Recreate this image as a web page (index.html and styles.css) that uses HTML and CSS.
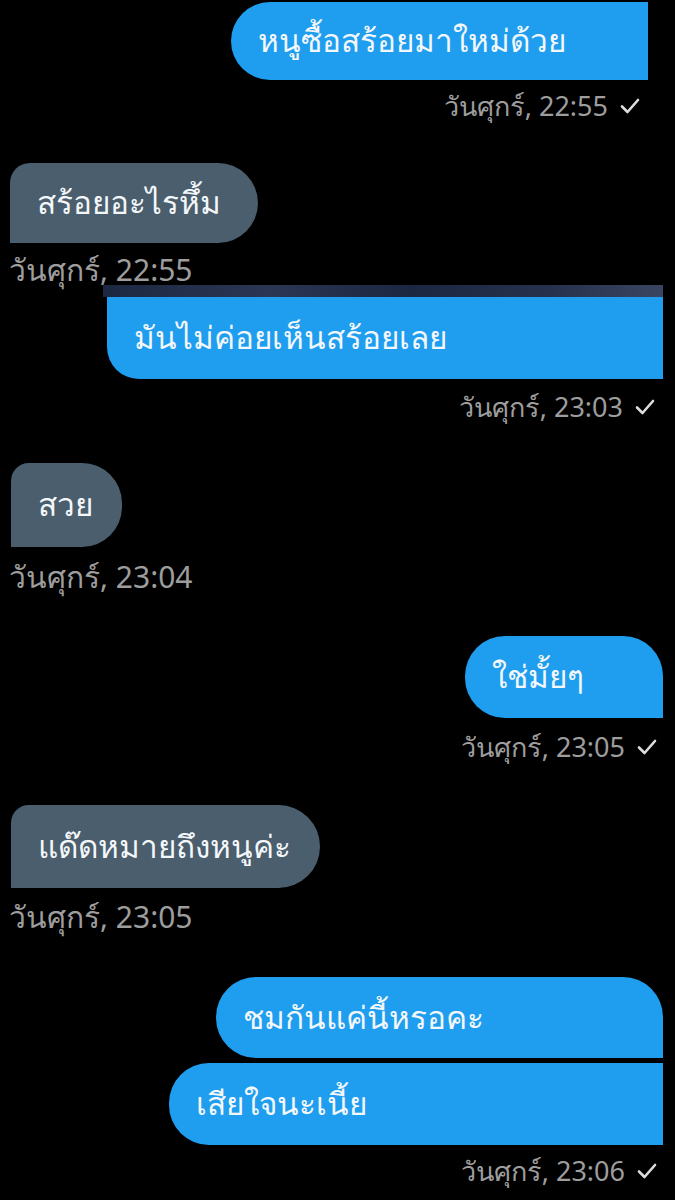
FILE: index.html
```html
<!DOCTYPE html>
<html lang="th">
<head>
<meta charset="utf-8">
<link rel="stylesheet" href="styles.css">
</head>
<body>
<div class="chat">
  <div class="row out r1"><div class="bubble blue b1">หนูซื้อสร้อยมาใหม่ด้วย</div></div>
  <div class="ts out t1">วันศุกร์, 22:55 <svg class="tick" viewBox="0 0 20 16"><path d="M2 8.5 L7.5 14 L18 2"/></svg></div>

  <div class="row in r2"><div class="bubble gray b2">สร้อยอะไรหึ้ม</div></div>
  <div class="ts in t2">วันศุกร์, 22:55</div>

  <div class="row out r3">
    <div class="stack">
      <div class="strip"></div>
      <div class="bubble blue b3">มันไม่ค่อยเห็นสร้อยเลย</div>
    </div>
  </div>
  <div class="ts out t3">วันศุกร์, 23:03 <svg class="tick" viewBox="0 0 20 16"><path d="M2 8.5 L7.5 14 L18 2"/></svg></div>

  <div class="row in r4"><div class="bubble gray b4">สวย</div></div>
  <div class="ts in t4">วันศุกร์, 23:04</div>

  <div class="row out r5"><div class="bubble blue b5">ใช่มั้ยๆ</div></div>
  <div class="ts out t5">วันศุกร์, 23:05 <svg class="tick" viewBox="0 0 20 16"><path d="M2 8.5 L7.5 14 L18 2"/></svg></div>

  <div class="row in r6"><div class="bubble gray b6">แด๊ดหมายถึงหนูค่ะ</div></div>
  <div class="ts in t6">วันศุกร์, 23:05</div>

  <div class="row out r7"><div class="bubble blue b7">ชมกันแค่นี้หรอคะ</div></div>
  <div class="row out r8"><div class="bubble blue b8">เสียใจนะเนี้ย</div></div>
  <div class="ts out t7">วันศุกร์, 23:06 <svg class="tick" viewBox="0 0 20 16"><path d="M2 8.5 L7.5 14 L18 2"/></svg></div>
</div>
</body>
</html>
```

FILE: styles.css
```css
html, body {
  margin: 0;
  padding: 0;
  background: #000;
}
body {
  width: 675px;
  height: 1200px;
  overflow: hidden;
  font-family: "Noto Sans", "DejaVu Sans", sans-serif;
}
.chat {
  display: flex;
  flex-direction: column;
}
.row {
  display: flex;
}
.row.out { justify-content: flex-end; padding-right: 12px; }
.row.in { justify-content: flex-start; padding-left: 11px; }

.bubble {
  box-sizing: border-box;
  display: flex;
  align-items: center;
  padding-left: 27px;
  color: #f4f7fa;
  font-size: 31.5px;
  white-space: nowrap;
}
.blue { background: #1f9ef0; }
.gray { background: #4a5e6d; }

.ts {
  color: #9d9d9d;
  font-size: 27px;
  height: 30px;
  line-height: 30px;
  display: flex;
  align-items: center;
  white-space: nowrap;
}
.ts.out { justify-content: flex-end; padding-right: 22px; }
.ts.in { padding-left: 11px; font-size: 30px; }
.tick {
  width: 20px;
  height: 16px;
  margin-left: 12px;
  fill: none;
  stroke: #dcdcdc;
  stroke-width: 2.6;
  stroke-linecap: round;
  stroke-linejoin: round;
}

/* row 1 */
.row.r1 { margin-top: 2px; padding-right: 27px; }
.b1 { width: 417px; height: 78px; border-radius: 39px 0 0 39px; }
.ts.t1 { margin-top: 11px; padding-right: 35px; }

/* row 2 */
.row.r2 { margin-top: 42px; padding-left: 10px; }
.b2 { width: 248px; height: 80px; border-radius: 20px 40px 40px 0; }
.ts.t2 { margin-top: 12px; padding-left: 9px; }

/* row 3 */
.row.r3 { margin-top: 0; }
.stack { display: flex; flex-direction: column; align-items: flex-end; }
.strip {
  width: 560px;
  height: 12px;
  background: linear-gradient(90deg, #1c2740 0%, #2b3655 30%, #1b2640 55%, #26314d 80%, #3a4562 100%);
}
.b3 { width: 556px; height: 82px; border-radius: 0 0 0 32px; }
.ts.t3 { margin-top: 13px; padding-right: 20px; }

/* row 4 */
.row.r4 { margin-top: 41px; }
.b4 { width: 111px; height: 84px; border-radius: 18px 40px 40px 0; }
.ts.t4 { margin-top: 15px; padding-left: 9px; }

/* row 5 */
.row.r5 { margin-top: 44px; }
.b5 { width: 198px; height: 82px; border-radius: 40px 40px 0 40px; }
.ts.t5 { margin-top: 14px; padding-right: 18px; }

/* row 6 */
.row.r6 { margin-top: 43px; }
.b6 { width: 309px; height: 83px; border-radius: 18px 42px 42px 0; }
.ts.t6 { margin-top: 14px; padding-left: 9px; }

/* row 7 */
.row.r7 { margin-top: 45px; }
.b7 { width: 447px; height: 81px; border-radius: 40px 40px 0 40px; }
.row.r8 { margin-top: 5px; }
.b8 { width: 494px; height: 82px; border-radius: 40px 0 0 40px; }
.ts.t7 { margin-top: 11px; padding-right: 18px; }
```
